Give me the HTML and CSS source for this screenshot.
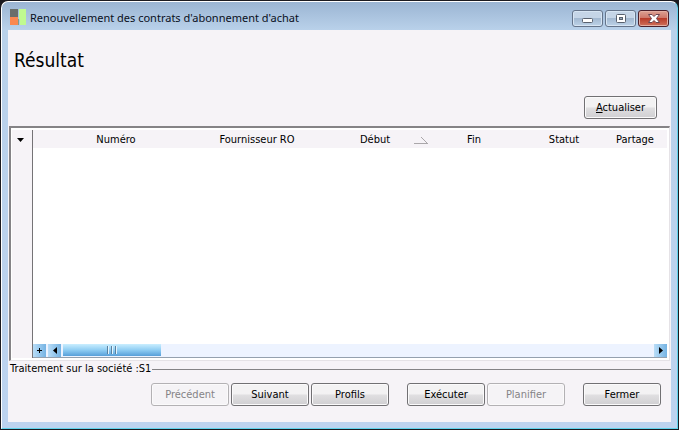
FILE: index.html
```html
<!DOCTYPE html>
<html lang="fr">
<head>
<meta charset="UTF-8">
<meta name="viewport" content="width=device-width, initial-scale=1">
<title>Renouvellement des contrats d'abonnement d'achat</title>
<link rel="stylesheet" href="styles.css">
</head>
<body>

<div class="window">
  <header class="titlebar">
    <svg class="logo" width="16" height="16" viewBox="0 0 16 16" aria-hidden="true">
      <path fill="#696e6b" d="M0 0h8v8H0z"/>
      <path fill="#fa8750" d="M0 8h8v8H0z"/>
      <path fill="#c0fa90" d="M9 0h7v16h-6V11L9 10z"/>
      <path fill="#7f9c8a" d="M8 10h1v6H8z"/>
    </svg>
    <span class="caption">Renouvellement des contrats d'abonnement d'achat</span>
    <div class="window-buttons">
      <button class="win-btn" aria-label="Réduire">
        <svg width="12" height="11" viewBox="0 0 12 11"><rect x=".5" y="5.5" width="10" height="4" rx="1" fill="#fff" stroke="#59616e"/></svg>
      </button>
      <button class="win-btn" aria-label="Agrandir">
        <svg width="12" height="11" viewBox="0 0 12 11"><rect x="1.5" y="1.5" width="9" height="8" rx="1" fill="#fff" stroke="#59616e"/><rect x="4.5" y="4.5" width="3" height="2" fill="#9ab" stroke="#59616e"/></svg>
      </button>
      <button class="win-btn close" aria-label="Fermer la fenêtre">
        <svg width="12" height="11" viewBox="0 0 12 11"><path d="M.5 1.500h3.500L6 3.500l2-2h3.500L8.500 5.500l3 4H8l-2-2-2 2H.5l3-4z" fill="#fff" stroke="#6b4550"/></svg>
      </button>
    </div>
  </header>

  <main class="content">
    <h1>Résultat</h1>
    <div class="toolbar">
      <button class="btn refresh"><u>A</u>ctualiser</button>
    </div>

    <div class="grid">
      <button class="gutter" aria-label="Menu de la grille">
        <svg width="7" height="4" viewBox="0 0 7 4"><path d="M0 0h7L3.500 4z"/></svg>
      </button>
      <div class="list">
        <table>
          <colgroup>
            <col>
            <col class="col-supplier">
            <col class="col-start">
            <col class="col-date">
            <col class="col-date">
            <col class="col-share">
          </colgroup>
          <thead>
            <tr>
              <th>Numéro</th>
              <th>Fournisseur RO</th>
              <th class="sorted">Début
                <svg width="14" height="7" viewBox="0 0 14 7"><path d="M0 6.500h14M7 0l6 6" fill="none" stroke="#aaa7aa"/></svg>
              </th>
              <th>Fin</th>
              <th>Statut</th>
              <th>Partage</th>
            </tr>
          </thead>
        </table>
        <div class="scrollbar">
          <button class="scroll-btn" aria-label="Ajouter">
            <svg width="7" height="7" viewBox="0 0 7 7"><path d="M3 1h1v2h2v1H4v2H3V4H1V3h2z"/></svg>
          </button>
          <button class="scroll-btn" aria-label="Défiler à gauche">
            <svg width="4" height="7" viewBox="0 0 4 7"><path d="M4 0v7L0 3.500z"/></svg>
          </button>
          <div class="track">
            <div class="thumb"><i></i><i></i><i></i></div>
          </div>
          <button class="scroll-btn" aria-label="Défiler à droite">
            <svg width="4" height="7" viewBox="0 0 4 7"><path d="M0 0v7l4-3.500z"/></svg>
          </button>
        </div>
      </div>
    </div>

    <fieldset class="footer">
      <legend>Traitement sur la société :S1</legend>
      <div class="actions">
        <div class="group">
          <button class="btn" disabled>Précédent</button>
          <button class="btn">Suivant</button>
          <button class="btn">Profils</button>
        </div>
        <div class="group">
          <button class="btn">Exécuter</button>
          <button class="btn" disabled>Planifier</button>
        </div>
        <button class="btn">Fermer</button>
      </div>
    </fieldset>
  </main>
</div>

</body>
</html>
```
FILE: styles.css
```css
* {
  box-sizing: border-box;
}

body {
  margin: 0;
  height: 100vh;
  padding: 1px;
  background: #1b1a20;
  font-family: Tahoma, "DejaVu Sans Condensed", "DejaVu Sans", sans-serif;
  font-size: 11px;
  line-height: 14px;
  color: #000;
}

button {
  padding: 0;
  font: inherit;
  color: inherit;
}

.window {
  height: 100%;
  display: flex;
  flex-direction: column;
  padding: 0 6px 6px;
  border: 1px solid #5fd3ec;
  border-top-color: #fff;
  border-left-color: #fff;
  border-radius: 7px 7px 0 0;
  background: linear-gradient(#9bb5d3, #b9d1ea 28px, #bdd3ef);
}

.titlebar {
  height: 28px;
  flex: none;
  display: flex;
  align-items: center;
  gap: 4px;
  padding: 4px 2px 0;
}

.logo {
  margin-bottom: 2px;
}

.caption {
  flex: 1;
  font-family: "Segoe UI", "Noto Sans", "Open Sans", sans-serif;
  white-space: nowrap;
  color: #0a1022;
}

.window-buttons {
  display: flex;
  gap: 2px;
}

.win-btn {
  width: 31px;
  height: 17px;
  display: flex;
  align-items: center;
  justify-content: center;
  border: 1px solid #65748a;
  border-radius: 3px;
  background: linear-gradient(#c5d5e7 45%, #a3b9d1 50%, #bdd2e8);
  box-shadow: inset 0 0 0 1px #d7e5f3;
}

.win-btn.close {
  border-color: #4b202b;
  background: linear-gradient(#dca193, #cf786a 45%, #b83c2a 50%, #cf705b);
  box-shadow: inset 0 0 0 1px #e3aea2;
}

.content {
  flex: 1;
  min-height: 0;
  display: flex;
  flex-direction: column;
  background: #f6f3f7;
}

h1 {
  margin: 18px 6px 0;
  font-size: 19px;
  font-weight: normal;
  line-height: 24px;
}

.toolbar {
  display: flex;
  justify-content: flex-end;
  padding: 24px 14px 7px;
}

.btn {
  width: 78px;
  height: 23px;
  border: 1px solid #717073;
  border-radius: 3px;
  background: linear-gradient(#f3f2f3 45%, #dfdee0 55%, #d0cfd2);
  box-shadow: inset 0 0 0 1px #fbfafb;
}

.btn.refresh {
  width: 73px;
}

.btn:disabled {
  border-color: #b3b1b4;
  background: #f5f3f6;
  color: #858386;
}

.grid {
  flex: 1;
  display: flex;
  margin: 0 1px;
  padding: 2px 2px 2px 1px;
  border: 1px solid #e5e2e6;
  border-top: 2px solid #858386;
  border-left: 2px solid #858386;
  background: #fff;
}

.gutter {
  width: 21px;
  display: flex;
  justify-content: center;
  padding: 8px 3px 0 0;
  border: 0;
  border-right: 1px solid #757376;
  background: #f6f3f7;
}

.list {
  flex: 1;
  display: flex;
  flex-direction: column;
  justify-content: space-between;
}

table {
  width: 100%;
  table-layout: fixed;
  border-collapse: collapse;
  background: #f6f3f7;
}

th {
  height: 18px;
  padding: 1px 0 0;
  font-weight: normal;
}

th:first-child {
  padding-left: 6px;
}

th:last-child {
  padding-right: 6px;
}

.col-supplier {
  width: 128px;
}

.col-start {
  width: 108px;
}

.col-date {
  width: 90px;
}

.col-share {
  width: 58px;
}

.sorted {
  position: relative;
}

.sorted svg {
  position: absolute;
  right: 1px;
  bottom: 4px;
}

.scrollbar {
  height: 14px;
  display: flex;
  gap: 2px;
  border-bottom: 1px solid #94a0ae;
  background: #edf3ff;
}

.scroll-btn {
  width: 13px;
  display: flex;
  align-items: center;
  justify-content: center;
  border: 0;
  background: linear-gradient(to right, #b9ddf7, #75b3e3);
}

.track {
  flex: 1;
  display: flex;
}

.thumb {
  width: 98px;
  height: 12px;
  display: flex;
  align-items: center;
  justify-content: center;
  gap: 2px;
  background: linear-gradient(#caeeff, #8fcdf3 50%, #579fd9);
}

.thumb i {
  width: 2px;
  height: 8px;
  border-left: 1px solid #58809f;
  border-right: 1px solid #e4f5ff;
}

.footer {
  margin: 1px 0 0;
  min-width: 0;
  padding: 7px 10px 16px 0;
  border: 0;
  border-top: 1px solid #858386;
}

legend {
  padding: 0 1px 0 2px;
}

.actions {
  display: flex;
  justify-content: flex-end;
  gap: 18px;
}

.group {
  display: flex;
  gap: 2px;
}
```
